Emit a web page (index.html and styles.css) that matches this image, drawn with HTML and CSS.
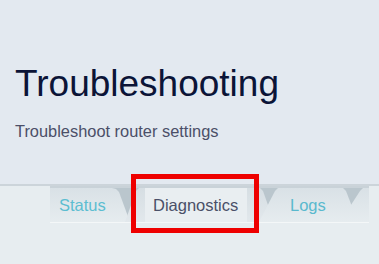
FILE: index.html
```html
<!DOCTYPE html>
<html>
<head>
<meta charset="utf-8">
<link rel="stylesheet" href="styles.css">
</head>
<body>
<div class="header">
  <h1 class="title">Troubleshooting</h1>
  <p class="subtitle">Troubleshoot router settings</p>
</div>
<div class="lower">
  <div class="strip">
    <div class="tab tab-status">Status</div>
    <div class="tab tab-diag">Diagnostics</div>
    <div class="tab tab-logs">Logs</div>
    <div class="tab tab-next"></div>
  </div>
</div>
<div class="highlight"></div>
</body>
</html>
```
FILE: styles.css
```css
html, body {
  margin: 0;
  padding: 0;
}
body {
  width: 379px;
  height: 264px;
  overflow: hidden;
  background: #e7edf0;
  font-family: "Liberation Sans", Arial, sans-serif;
  position: relative;
}
.header {
  height: 120px;
  padding: 64px 0 0 15px;
  background: #e3e9f0;
  border-bottom: 2px solid #ccd4da;
}
.title {
  margin: 0;
  font-size: 37px;
  line-height: 40px;
  font-weight: normal;
  color: #0b1437;
}
.subtitle {
  margin: 17px 0 0 0;
  font-size: 16.4px;
  line-height: 20px;
  color: #4b4f68;
}
.lower {
  padding-left: 50px;
}
.strip {
  width: 319px;
  height: 34px;
  display: flex;
  background: #bac6cd;
  border-top: 2px solid #c9d2d8;
  border-bottom: 1px solid #f4f7f8;
}
.tab {
  height: 34px;
  line-height: 34px;
  font-size: 16.5px;
  flex: none;
  box-sizing: border-box;
  background: linear-gradient(#d9e1e6, #e6ecef);
}
.tab-status {
  width: 80px;
  padding-left: 9px;
  color: #5cbdd1;
  clip-path: polygon(0 0, 62px 0, 66px 1px, 69px 4px, 80px 34px, 0 34px);
}
.tab-diag {
  width: 149px;
  margin-left: -5px;
  padding-left: 28px;
  color: #4a5068;
  background:
    linear-gradient(90deg, transparent 20px, #e9eef1 20px, #e9eef1 122px, transparent 122px),
    linear-gradient(#d6dee3, #e2e8ec);
  clip-path: polygon(0 34px, 11px 3px, 14px 0, 135px 0, 138px 3px, 149px 34px);
}
.tab-logs {
  width: 99px;
  margin-left: -15px;
  padding-left: 31px;
  color: #5ab9ce;
  clip-path: polygon(0 34px, 16px 3px, 19px 0, 84px 0, 87px 3px, 99px 34px);
}
.tab-next {
  width: 29px;
  margin-left: -18px;
  clip-path: polygon(0 34px, 20px 3px, 23px 0, 29px 0, 29px 34px);
}
.highlight {
  position: absolute;
  left: 131px;
  top: 174px;
  width: 118px;
  height: 49px;
  border: 5px solid #ee0000;
}
```
